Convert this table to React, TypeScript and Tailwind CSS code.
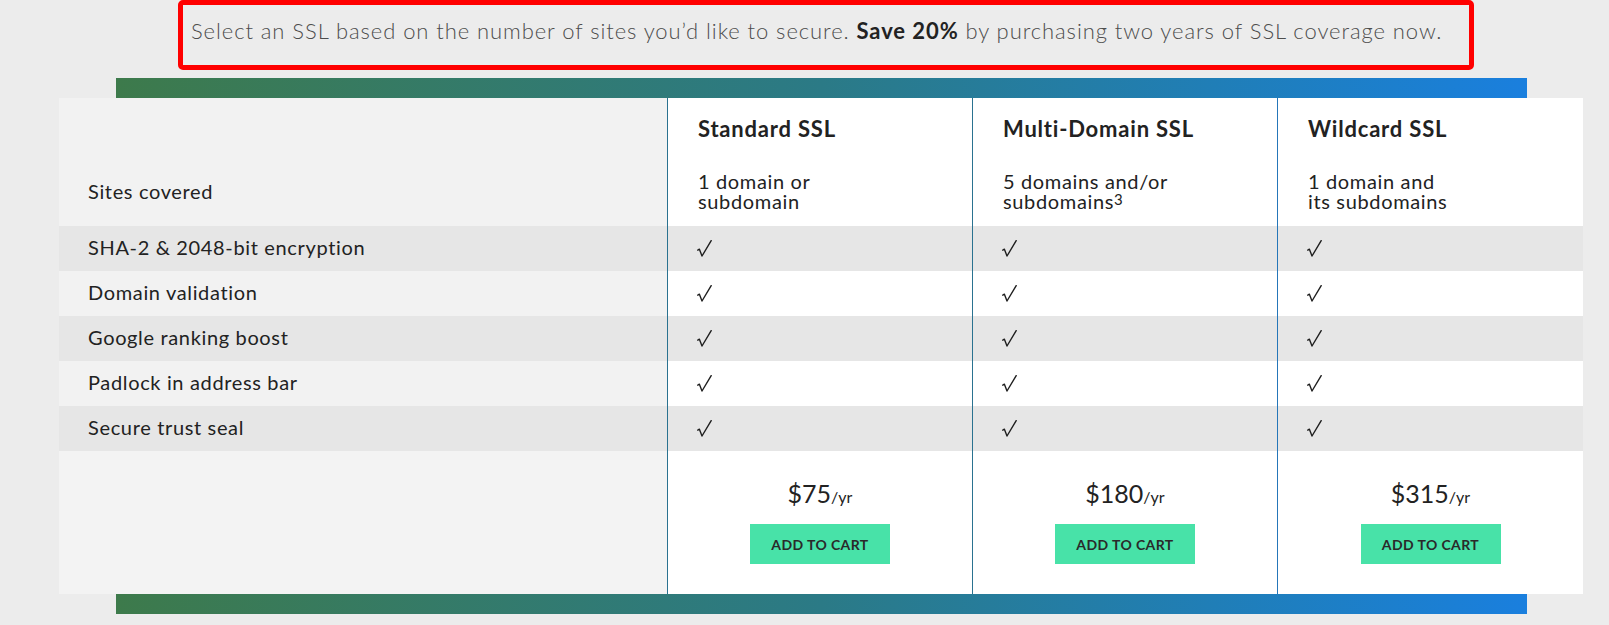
import React from "react";

const plans = [
  { title: "Standard SSL", sites: ["1 domain or", "subdomain"], sup: false, price: "$75", line: "border-[#2a7290]" },
  { title: "Multi-Domain SSL", sites: ["5 domains and/or", "subdomains"], sup: true, price: "$180", line: "border-[#2a7290]" },
  { title: "Wildcard SSL", sites: ["1 domain and", "its subdomains"], sup: false, price: "$315", line: "border-[#2576b9]" },
];

const features = [
  "SHA-2 & 2048-bit encryption",
  "Domain validation",
  "Google ranking boost",
  "Padlock in address bar",
  "Secure trust seal",
];

function Check() {
  return (
    <svg width="15" height="17" viewBox="0 0 15 17" fill="none" className="block">
      <path d="M0.8 10.2 L2.4 9.2 L5 16 L14.2 0.6" stroke="#1f1f1f" strokeWidth="1.4" strokeLinejoin="round" strokeLinecap="round" />
    </svg>
  );
}

function GradientBar() {
  return <div className="ml-[116px] w-[1411px] h-[20px] bg-gradient-to-r from-[#3d7a4b] via-[#2b7a86] to-[#1a7fde]" />;
}

export default function App() {
  return (
    <div className="w-[1609px] h-[625px] bg-[#ececec] overflow-hidden font-['Lato',sans-serif]">
      {/* intro note */}
      <div className="ml-[178px] w-[1296px] h-[70px] border-[5px] border-[#ff0000] rounded-[5px] flex items-center pl-[8px] pb-[9px]">
        <p className="text-[22px] font-light text-[#4d4d4d] tracking-[0.92px] whitespace-nowrap">
          Select an SSL based on the number of sites you’d like to secure. <span className="font-bold text-[#222]">Save 20%</span> by purchasing two years of SSL coverage now.
        </p>
      </div>

      <div className="h-[8px]" />
      <GradientBar />

      {/* comparison table */}
      <div className="ml-[59px] w-[1524px] grid grid-cols-[608px_305px_305px_306px] text-[#222] tracking-[0.65px]">
        {/* header row */}
        <div className="h-[128px] bg-[#f2f2f2] flex items-end pl-[29px] pb-[20px] text-[20px]">Sites covered</div>
        {plans.map((p) => (
          <div key={p.title} className={`h-[128px] bg-white border-l ${p.line} pl-[30px] pt-[18px]`}>
            <div className="text-[22px] leading-[26px] font-bold tracking-[0.8px]">{p.title}</div>
            <div className="mt-[29px] text-[20px] leading-[20px]">
              <div>{p.sites[0]}</div>
              <div>
                {p.sites[1]}
                {p.sup && <sup className="text-[15px] relative -top-[4px]">3</sup>}
              </div>
            </div>
          </div>
        ))}

        {/* feature rows */}
        {features.map((f, i) => (
          <React.Fragment key={f}>
            <div className={`h-[45px] flex items-center pl-[29px] pb-[3px] text-[20px] ${i % 2 === 0 ? "bg-[#e6e6e6]" : "bg-[#f2f2f2]"}`}>{f}</div>
            {plans.map((p) => (
              <div key={p.title} className={`h-[45px] flex items-center pl-[29px] border-l ${p.line} ${i % 2 === 0 ? "bg-[#e6e6e6]" : "bg-white"}`}>
                <Check />
              </div>
            ))}
          </React.Fragment>
        ))}

        {/* price row */}
        <div className="h-[143px] bg-[#f3f3f3]" />
        {plans.map((p) => (
          <div key={p.title} className={`h-[143px] bg-white border-l ${p.line} flex flex-col items-center pt-[27px] tracking-normal`}>
            <div className="leading-[30px]">
              <span className="text-[25px]">{p.price}</span>
              <span className="text-[16px]">/yr</span>
            </div>
            <button className="mt-[12px] w-[140px] h-[40px] bg-[#48e2a8] text-[14px] font-bold tracking-[0.4px] text-[#2a2a2a]">
              ADD TO CART
            </button>
          </div>
        ))}
      </div>

      <GradientBar />
    </div>
  );
}
